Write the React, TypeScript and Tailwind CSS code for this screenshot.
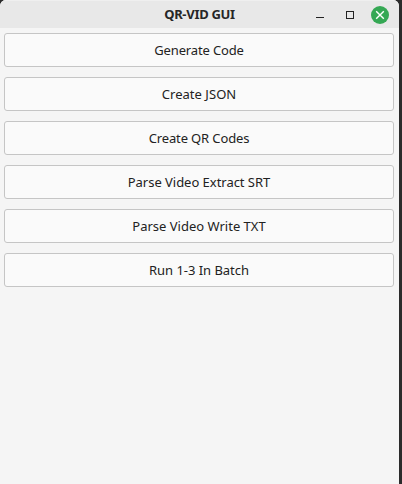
const actions = [
  { label: "Generate Code", spacing: "tracking-[-0.15px]" },
  { label: "Create JSON", spacing: "tracking-[0.04px]" },
  { label: "Create QR Codes", spacing: "tracking-[-0.13px]" },
  { label: "Parse Video Extract SRT", spacing: "tracking-[-0.03px]" },
  { label: "Parse Video Write TXT", spacing: "tracking-[0px]" },
  { label: "Run 1-3 In Batch", spacing: "tracking-[-0.04px]" },
];

function TitleBar() {
  return (
    <header className="grid h-7 grid-cols-[1fr_auto_1fr] items-center border-t border-[#efefef] bg-[#e8e8e8]">
      <span />
      <h1 className="pb-0.5 text-[13px] leading-4 font-bold tracking-[-0.3px] text-[#262626]">QR-VID GUI</h1>
      <div className="flex items-center justify-end gap-3 pr-2.5">
        <button aria-label="Minimize" className="flex size-[18px] items-center justify-center">
          <svg width="18" height="18" shapeRendering="crispEdges"><path d="M5 11.5h8" stroke="#222" /></svg>
        </button>
        <button aria-label="Maximize" className="flex size-[18px] items-center justify-center">
          <svg width="18" height="18" shapeRendering="crispEdges"><path d="M5.5 5.5h7v7h-7z" fill="none" stroke="#222" /></svg>
        </button>
        <button aria-label="Close" className="flex size-[18px] items-center justify-center rounded-full bg-[#35a854]">
          <svg width="18" height="18"><path d="m5.2 5.2 7.6 7.6m0-7.6-7.6 7.6" stroke="#fff" strokeWidth="1.4" /></svg>
        </button>
      </div>
    </header>
  );
}

export default function App() {
  return (
    <div className="h-[484px] w-[402px] overflow-hidden bg-[#2b2b2b] pr-[3px] font-['Noto_Sans','Open_Sans',sans-serif]">
      <main className="h-full overflow-hidden rounded-t-[6px] bg-[#f5f5f5]">
        <TitleBar />
        <div className="flex flex-col gap-2.5 pt-[5px] pr-[5px] pl-1">
          {actions.map(({ label, spacing }) => (
            <button
              key={label}
              className={`h-[34px] rounded-[3px] border border-[#c5c5c5] bg-[#fafafa] text-[13px] leading-4 text-[#222222] ${spacing}`}
            >
              {label}
            </button>
          ))}
        </div>
      </main>
    </div>
  );
}
